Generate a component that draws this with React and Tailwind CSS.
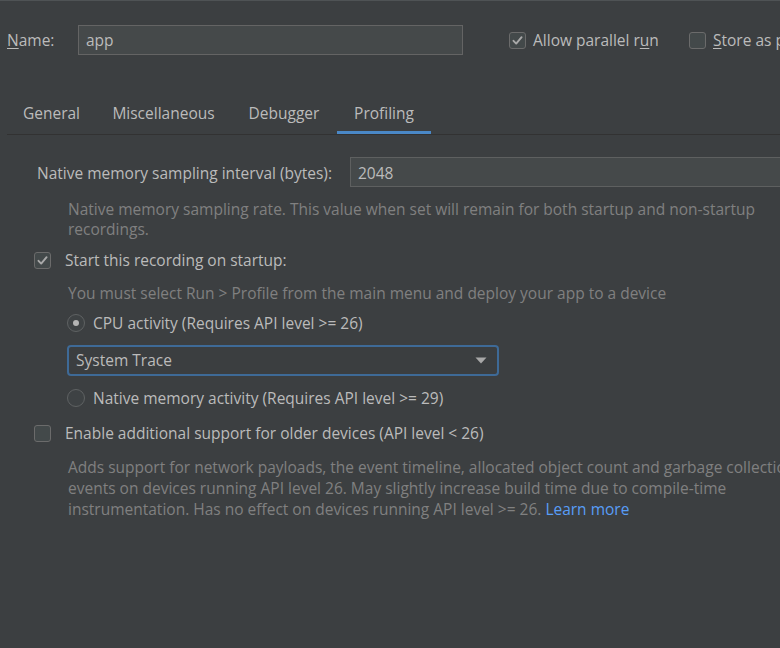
import React from 'react'

const Checkbox = ({ checked }) => (
  <div className="flex h-[17px] w-[17px] shrink-0 items-center justify-center rounded-[3px] border border-[#6b6b6b] bg-[#43494a]">
    {checked && (
      <svg width="13" height="13" viewBox="0 0 13 13">
        <polyline points="2.5,6.8 5.2,9.6 10.6,3.2" fill="none" stroke="#a9a9a9" strokeWidth="1.9" strokeLinecap="round" strokeLinejoin="round" />
      </svg>
    )}
  </div>
)

const Radio = ({ checked }) => (
  <div className="flex h-[18px] w-[18px] shrink-0 items-center justify-center rounded-full border border-[#5f6263] bg-[#3e4244]">
    {checked && <div className="h-[6px] w-[6px] rounded-full bg-[#b4b4b4]" />}
  </div>
)

// tab widths measured from the screenshot
const tabs = [
  { label: 'General', w: 'w-[89px]' },
  { label: 'Miscellaneous', w: 'w-[135px]' },
  { label: 'Debugger', w: 'w-[106px]' },
  { label: 'Profiling', w: 'w-[94px]', active: true },
]

export default function App() {
  return (
    <div className="h-[648px] w-[780px] overflow-hidden border-t border-[#4f5355] bg-[#3c3f41] font-['Open_Sans',sans-serif] text-[15.5px] text-[#bbbbbb]">
      {/* name row */}
      <div className="mt-[24px] flex h-[30px] items-center whitespace-nowrap pl-[7px]">
        <div className="w-[71px] shrink-0 pt-[2px]">
          <span className="underline underline-offset-2">N</span>ame:
        </div>
        <div className="flex h-[30px] w-[385px] shrink-0 items-center border border-[#646464] bg-[#45494a] pl-[7px] pt-[2px]">app</div>
        <div className="ml-[46px] flex w-[180px] shrink-0 items-center gap-[7px]">
          <Checkbox checked />
          <span className="pt-[2px]">
            Allow parallel r<span className="underline underline-offset-2">u</span>n
          </span>
        </div>
        <div className="flex shrink-0 items-center gap-[7px]">
          <Checkbox />
          <span className="pt-[2px]">
            <span className="underline underline-offset-2">S</span>tore as project file
          </span>
        </div>
      </div>

      {/* tabs */}
      <div className="ml-[7px] mt-[37px] flex border-b border-[#323232]">
        {tabs.map((t) => (
          <div key={t.label} className={`relative flex h-[42px] shrink-0 items-center justify-center pt-[2px] ${t.w}`}>
            {t.label}
            {t.active && <div className="absolute inset-x-0 bottom-0 h-[3px] bg-[#4a88c7]" />}
          </div>
        ))}
      </div>

      {/* profiling content */}
      <div className="pt-[22px] whitespace-nowrap">
        <div className="flex h-[30px] items-center pl-[37px]">
          <div className="w-[313px] shrink-0 pt-[3px]">Native memory sampling interval (bytes):</div>
          <div className="flex h-[30px] w-[440px] shrink-0 items-center border border-[#5e6060] bg-[#45494a] pl-[7px] pt-[3px]">2048</div>
        </div>

        <div className="mt-[12px] pl-[68px] leading-[20px] text-[#808080]">
          <div>Native memory sampling rate. This value when set will remain for both startup and non-startup</div>
          <div>recordings.</div>
        </div>

        <div className="mt-[11px] flex h-[20px] items-center gap-[14px] pl-[34px]">
          <Checkbox checked />
          <span className="pt-[2px]">Start this recording on startup:</span>
        </div>

        <div className="mt-[13px] h-[20px] pl-[68px] leading-[20px] text-[#808080]">
          You must select Run &gt; Profile from the main menu and deploy your app to a device
        </div>

        <div className="mt-[10px] flex h-[20px] items-center gap-[8px] pl-[67px]">
          <Radio checked />
          <span className="pt-[2px]">CPU activity (Requires API level &gt;= 26)</span>
        </div>

        <div className="ml-[67px] mt-[12px] flex h-[31px] w-[432px] items-center rounded-[4px] border-2 border-[#3e6a97] bg-[#3b3e40] pl-[7px] pr-[10px]">
          <span>System Trace</span>
          <svg className="ml-auto" width="12" height="7" viewBox="0 0 12 7">
            <polygon points="0.5,0.5 11.5,0.5 6,6.5" fill="#a8a8a8" />
          </svg>
        </div>

        <div className="mt-[12px] flex h-[20px] items-center gap-[8px] pl-[67px]">
          <Radio />
          <span className="pt-[2px]">Native memory activity (Requires API level &gt;= 29)</span>
        </div>

        <div className="mt-[15px] flex h-[20px] items-center gap-[14px] pl-[34px]">
          <Checkbox />
          <span className="pt-[2px]">Enable additional support for older devices (API level &lt; 26)</span>
        </div>

        <div className="mt-[14px] pl-[68px] leading-[21px] text-[#808080]">
          <div>Adds support for network payloads, the event timeline, allocated object count and garbage collection</div>
          <div>events on devices running API level 26. May slightly increase build time due to compile-time</div>
          <div>
            instrumentation. Has no effect on devices running API level &gt;= 26.{' '}
            <span className="text-[#589df6]">Learn more</span>
          </div>
        </div>
      </div>
    </div>
  )
}
